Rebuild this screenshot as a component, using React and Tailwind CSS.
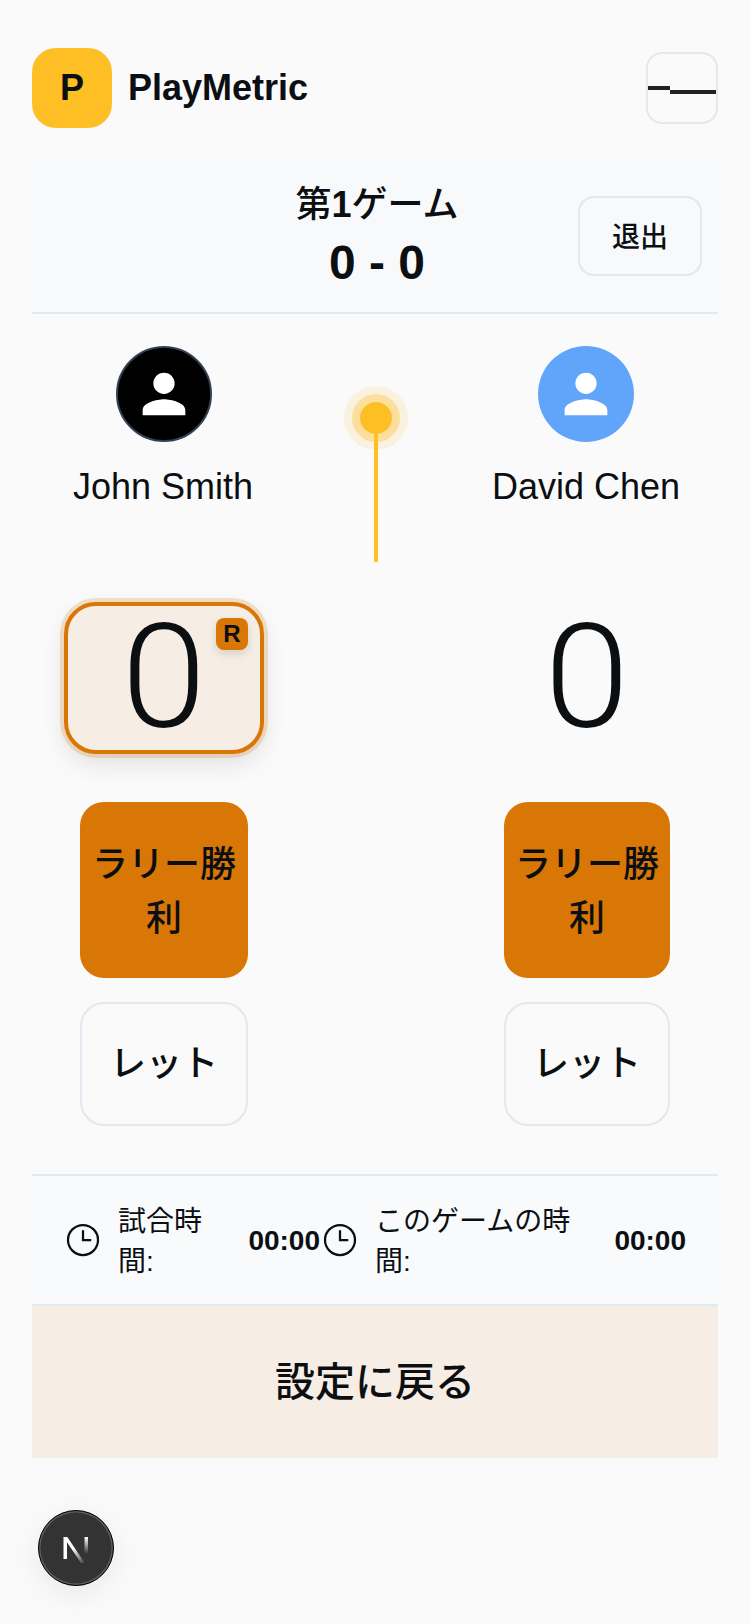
import React from 'react';

const sans = '[font-family:"Liberation_Sans","Noto_Sans_CJK_JP",sans-serif]';

const PersonIcon = () => (
  <svg viewBox="0 0 24 24" className="w-[64px] h-[64px]" fill="white">
    <path d="M12 12c2.210 0 4-1.790 4-4s-1.790-4-4-4-4 1.790-4 4 1.790 4 4 4zm0 2c-2.670 0-8 1.340-8 4v2h16v-2c0-2.660-5.330-4-8-4z" />
  </svg>
);

const ClockIcon = () => (
  <svg viewBox="0 0 24 24" className="w-[36px] h-[36px] shrink-0" fill="none" stroke="#0c0f12" strokeWidth="1.5">
    <circle cx="12" cy="12" r="10" />
    <path d="M12 5.500V12h5.500" />
  </svg>
);

const Player = ({ name, avatarClass, nameClass = '' }) => (
  <div className="flex flex-col items-center">
    <div className={`w-[96px] h-[96px] rounded-full flex items-center justify-center ${avatarClass}`}>
      <PersonIcon />
    </div>
    <div className={`mt-[21px] text-[36px] leading-[48px] text-[#0c0f12] ${nameClass}`}>{name}</div>
  </div>
);

const ScoreColumn = ({ active, btnWidth }) => (
  <div className="flex flex-col items-center">
    {active ? (
      <div className="relative w-[200px] h-[152px] rounded-[32px] border-[4px] border-[#d97706] bg-[#f6ede4] flex items-center justify-center shadow-[0_0_0_4px_rgba(217,119,6,0.2),0_10px_24px_rgba(0,0,0,0.1)]">
        <span className="inline-block scale-x-[1.06] text-[144px] leading-none font-light [font-family:Roboto,sans-serif] text-[#0c0f12]">0</span>
        <div className="absolute top-[12px] right-[12px] w-[32px] h-[32px] rounded-[8px] bg-[#d97706] flex items-center justify-center text-[24px] font-bold text-[#0c0f12] shadow-[0_4px_8px_rgba(0,0,0,0.12)]">R</div>
      </div>
    ) : (
      <div className="w-[200px] h-[152px] flex items-center justify-center">
        <span className="inline-block scale-x-[1.06] text-[144px] leading-none font-light [font-family:Roboto,sans-serif] text-[#0c0f12]">0</span>
      </div>
    )}
    <button className={`mt-[48px] h-[176px] rounded-[24px] bg-[#d97706] px-2 pt-1 text-[36px] leading-[54px] font-medium text-[#0c0f12] ${btnWidth}`}>ラリー勝利</button>
    <button className={`mt-[24px] h-[124px] rounded-[24px] border-2 border-[#e2e8f0] text-[36px] font-medium text-[#0c0f12] ${btnWidth}`}>レット</button>
  </div>
);

const TimerItem = ({ label, widthClass, labelClass }) => (
  <div className={`flex items-center ${widthClass}`}>
    <ClockIcon />
    <div className={`ml-[17px] pt-[4px] text-[28px] leading-[40px] text-[#0c0f12] ${labelClass}`}>{label}</div>
    <div className="ml-auto pt-[2px] text-[28px] font-bold text-[#0c0f12]">00:00</div>
  </div>
);

export default function App() {
  return (
    <div className={`min-h-[1624px] bg-[#fafafa] px-[32px] pt-[48px] ${sans}`}>
      <header className="flex items-center justify-between h-[80px]">
        <div className="flex items-center gap-[16px]">
          <div className="w-[80px] h-[80px] rounded-[24px] bg-[#fdbf24] flex items-center justify-center text-[36px] font-bold text-[#0c0f12]">P</div>
          <span className="text-[36px] font-bold text-[#0c0f12]">PlayMetric</span>
        </div>
        <button className="w-[72px] h-[72px] rounded-[16px] border-2 border-[#e2e8f0] flex items-center">
          <span className="w-[22px] h-[4px] bg-[#222]" />
          <span className="w-[46px] h-[4px] bg-[#222] mt-[8px]" />
        </button>
      </header>

      <section className="mt-[32px] h-[154px] bg-[#f8f9fb] border-b-2 border-[#e2e8f0] flex items-center relative">
        <div className="w-full pl-[4px] pt-[5px] text-center text-[#0c0f12]">
          <div className="text-[36px] leading-[48px] font-medium -mt-[2px] mb-[2px]">第<span className="font-bold">1</span>ゲーム</div>
          <div className="text-[48px] leading-[64px] font-bold">0 - 0</div>
        </div>
        <button className="absolute right-[16px] top-[36px] w-[124px] h-[80px] rounded-[16px] border-2 border-[#e2e8f0] pt-1 text-[28px] font-medium text-[#0c0f12]">退出</button>
      </section>

      <section className="grid grid-cols-[264px_160px_260px] mt-[32px]">
        <Player name="John Smith" avatarClass="bg-black border-2 border-[#334155]" nameClass="pr-[2px]" />
        <div className="flex flex-col items-center pt-[56px]">
          <div className="w-[32px] h-[32px] rounded-full bg-[#fdbf24] shadow-[0_0_0_8px_rgba(253,191,36,0.35),0_0_0_16px_rgba(253,191,36,0.13)]" />
          <div className="w-[4px] h-[128px] bg-[#fdbf24]" />
        </div>
        <Player name="David Chen" avatarClass="bg-[#60a5fa]" />
      </section>

      <section className="grid grid-cols-[264px_160px_262px] mt-[40px]">
        <ScoreColumn active btnWidth="w-[168px]" />
        <div />
        <ScoreColumn btnWidth="w-[166px]" />
      </section>

      <section className="mt-[48px] h-[132px] bg-[#f8fafc] border-y-2 border-[#e2e8f0] pl-[33px] pr-[32px] flex items-center">
        <TimerItem label="試合時間:" widthClass="w-[255px]" labelClass="w-[100px]" />
        <div className="w-[2px]" />
        <TimerItem label="このゲームの時間:" widthClass="flex-1" labelClass="w-[200px]" />
      </section>

      <button className="w-full h-[152px] bg-[#f6ede4] text-[40px] font-medium text-[#0c0f12]">設定に戻る</button>

      <div className="fixed left-[38px] bottom-[38px] w-[76px] h-[76px] rounded-full bg-[#333] border-[1.5px] border-black flex items-center justify-center shadow-[0_8px_32px_rgba(0,0,0,0.07),inset_0_0_0_1.5px_rgba(255,255,255,0.2)]">
        <svg viewBox="0 0 32 32" className="w-[32px] h-[32px]">
          <defs>
            <linearGradient id="nfade" x1="0" y1="0" x2="1" y2="1">
              <stop offset="0.45" stopColor="#fff" />
              <stop offset="1" stopColor="#fff" stopOpacity="0.05" />
            </linearGradient>
            <linearGradient id="nfade2" x1="0" y1="0" x2="0" y2="1">
              <stop offset="0" stopColor="#fff" />
              <stop offset="1" stopColor="#fff" stopOpacity="0" />
            </linearGradient>
          </defs>
          <path d="M3.500 5h3.500v22H3.500z" fill="#fff" />
          <path d="M3.500 5h3.800l17.500 26h-3.800z" fill="url(#nfade)" />
          <rect x="24.500" y="5" width="3.500" height="17" fill="url(#nfade2)" />
        </svg>
      </div>
    </div>
  );
}
